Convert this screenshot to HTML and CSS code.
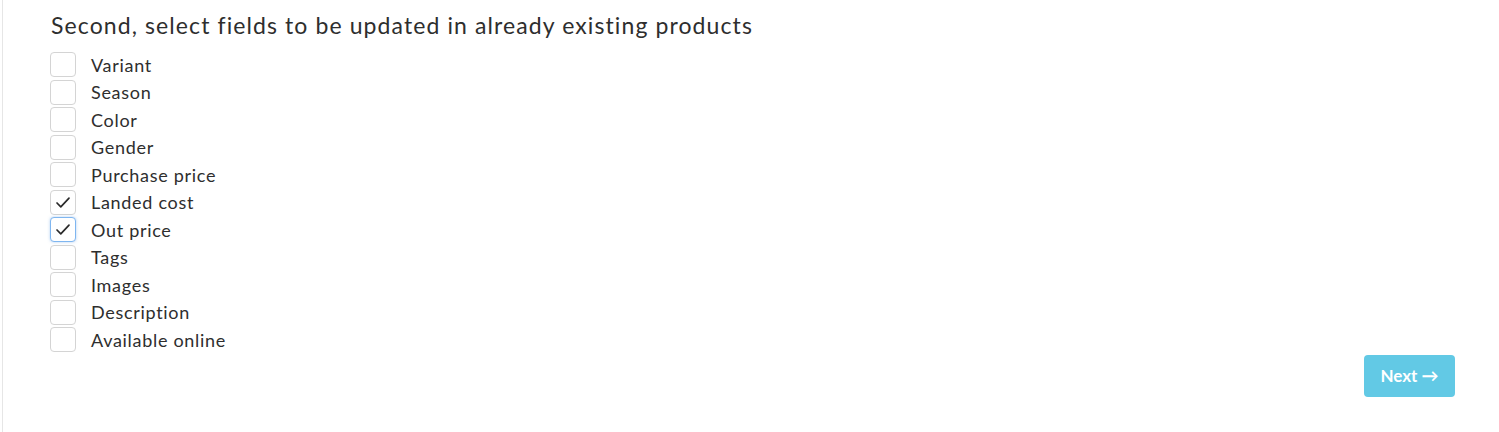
FILE: index.html
```html
<!DOCTYPE html>
<html>
<head>
<meta charset="utf-8">
<link rel="stylesheet" href="styles.css">
</head>
<body>
<div class="page">
  <div class="content">
    <h2 class="title">Second, select fields to be updated in already existing products</h2>
    <ul class="fields">
      <li class="field"><span class="box"></span><span class="label">Variant</span></li>
      <li class="field"><span class="box"></span><span class="label">Season</span></li>
      <li class="field"><span class="box"></span><span class="label">Color</span></li>
      <li class="field"><span class="box"></span><span class="label">Gender</span></li>
      <li class="field"><span class="box"></span><span class="label">Purchase price</span></li>
      <li class="field"><span class="box checked"><svg class="tick" viewBox="0 0 16 13" width="16" height="13"><path d="M2 7 L5.8 10.8 L14 2.2" fill="none" stroke="#2a2a2a" stroke-width="1.7" stroke-linecap="round" stroke-linejoin="round"/></svg></span><span class="label">Landed cost</span></li>
      <li class="field"><span class="box checked focus"><svg class="tick" viewBox="0 0 16 13" width="16" height="13"><path d="M2 7 L5.8 10.8 L14 2.2" fill="none" stroke="#2a2a2a" stroke-width="1.7" stroke-linecap="round" stroke-linejoin="round"/></svg></span><span class="label">Out price</span></li>
      <li class="field"><span class="box"></span><span class="label">Tags</span></li>
      <li class="field"><span class="box"></span><span class="label">Images</span></li>
      <li class="field"><span class="box"></span><span class="label">Description</span></li>
      <li class="field"><span class="box"></span><span class="label">Available online</span></li>
    </ul>
    <div class="actions">
      <button class="next">Next →</button>
    </div>
  </div>
</div>
</body>
</html>
```

FILE: styles.css
```css
html, body {
  margin: 0;
  padding: 0;
  background: #fff;
}
body {
  font-family: "Lato", "Noto Sans", sans-serif;
  color: #333;
}
.page {
  margin-left: 2px;
  border-left: 1px solid #e6e6e6;
  min-height: 432px;
  box-sizing: border-box;
}
.content {
  padding: 11px 44px 0 47px;
}
.title {
  margin: 0 0 12px 1px;
  font-size: 23px;
  font-weight: 400;
  line-height: 28px;
  letter-spacing: 1.1px;
  color: #2e2e2e;
}
.fields {
  list-style: none;
  margin: 0;
  padding: 0;
}
.field {
  display: flex;
  align-items: center;
  height: 27.5px;
}
.box {
  width: 26px;
  height: 25px;
  box-sizing: border-box;
  border: 1px solid #d4d4d4;
  border-radius: 4px;
  display: flex;
  align-items: center;
  justify-content: center;
  background: #fff;
}
.box.focus {
  border-color: #7fb6f0;
  box-shadow: 0 0 3px rgba(100, 160, 230, 0.5);
}
.label {
  margin-left: 15px;
  font-size: 18px;
  letter-spacing: 0.7px;
  color: #2e2e2e;
}
.actions {
  display: flex;
  justify-content: flex-end;
  margin-top: 1px;
}
.next {
  width: 91px;
  height: 42px;
  border: none;
  border-radius: 4px;
  background: #62c9e5;
  color: #fff;
  font-family: "Lato", "Noto Sans", sans-serif;
  font-weight: 700;
  font-size: 17px;
  cursor: pointer;
}
```
